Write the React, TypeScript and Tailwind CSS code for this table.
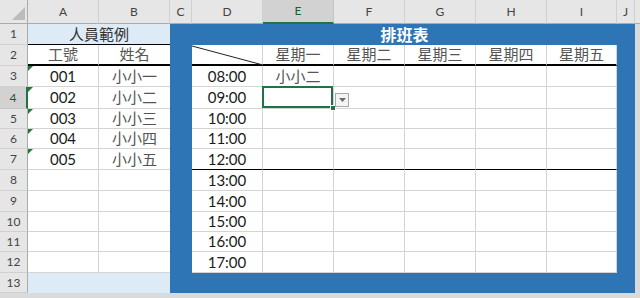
import React from "react";

type Row = { n: number; h: string };

// sheet row heights, rows 1..13
const ROWS: Row[] = [
  { n: 1, h: "h-[21px]" },
  { n: 2, h: "h-[21px]" },
  { n: 3, h: "h-[21px]" },
  { n: 4, h: "h-[22px]" },
  { n: 5, h: "h-[20px]" },
  { n: 6, h: "h-[20px]" },
  { n: 7, h: "h-[21px]" },
  { n: 8, h: "h-[21px]" },
  { n: 9, h: "h-[21px]" },
  { n: 10, h: "h-[20px]" },
  { n: 11, h: "h-[20px]" },
  { n: 12, h: "h-[21px]" },
  { n: 13, h: "h-[20px]" },
];

const COLUMNS = [
  { id: "A", w: "w-[71px]" },
  { id: "B", w: "w-[71px]" },
  { id: "C", w: "w-[22px]" },
  { id: "D", w: "w-[71px]" },
  { id: "E", w: "w-[71px]" },
  { id: "F", w: "w-[71px]" },
  { id: "G", w: "w-[71px]" },
  { id: "H", w: "w-[71px]" },
  { id: "I", w: "w-[70px]" },
  { id: "J", w: "w-[18px]" },
];

const STAFF = [
  ["001", "小小一"],
  ["002", "小小二"],
  ["003", "小小三"],
  ["004", "小小四"],
  ["005", "小小五"],
];

const DAYS = ["星期一", "星期二", "星期三", "星期四", "星期五"];
const TIMES = ["08:00", "09:00", "10:00", "11:00", "12:00", "13:00", "14:00", "15:00", "16:00", "17:00"];
const DAY_W = ["w-[71px]", "w-[71px]", "w-[71px]", "w-[71px]", "w-[70px]"];

const SELECTED_COL = "E";
const SELECTED_ROW = 4;

function TextFlag() {
  // little green "number stored as text" marker
  return (
    <svg className="absolute left-0 top-0" width="5" height="5" viewBox="0 0 5 5">
      <polygon points="0,0 5,0 0,5" fill="#1e7b34" />
    </svg>
  );
}

function LeftCells({ n }: { n: number }) {
  if (n === 1) {
    return (
      <div className="w-[142px] h-full bg-[#ddebf7] border-b border-black flex items-center justify-center text-[15px] text-[#333]">
        人員範例
      </div>
    );
  }
  if (n === 2) {
    return (
      <>
        <div className="w-[71px] h-full border-r border-[#d4d4d4] border-b-2 border-b-black flex items-center justify-center text-[15px] text-[#555]">
          工號
        </div>
        <div className="w-[71px] h-full border-b-2 border-b-black flex items-center justify-center text-[15px] text-[#555]">
          姓名
        </div>
      </>
    );
  }
  if (n === 13) {
    return <div className="w-[142px] h-full bg-[#ddebf7]" />;
  }
  const person = STAFF[n - 3];
  return (
    <>
      <div className="relative w-[71px] h-full border-r border-b border-[#d4d4d4] flex items-center justify-center text-[15px] text-[#1a1a1a]">
        {person && <TextFlag />}
        {person?.[0]}
      </div>
      <div className="w-[71px] h-full border-b border-[#d4d4d4] flex items-center justify-center text-[15px] text-[#555]">
        {person?.[1]}
      </div>
    </>
  );
}

function SelectedCell() {
  return (
    <>
      <div className="absolute -left-px -top-px right-0 bottom-0 border-2 border-[#217346] z-10" />
      <div className="absolute right-[-3px] bottom-[-3px] w-[6px] h-[6px] bg-[#217346] border border-white z-20" />
      <div className="absolute left-[72px] top-[6px] w-[14px] h-[14px] bg-[#f4f4f4] border border-[#a9a9a9] flex items-center justify-center z-20">
        <svg width="7" height="4" viewBox="0 0 7 4">
          <polygon points="0,0 7,0 3.5,4" fill="#6b6b6b" />
        </svg>
      </div>
    </>
  );
}

function ScheduleTable() {
  const body = ROWS.slice(1, 12);
  return (
    <div className="w-[425px] bg-white flex flex-col">
      {body.map((row, i) => {
        const isHead = row.n === 2;
        const noonLine = row.n === 7;
        const rowBorder = isHead
          ? "border-b-2 border-b-black"
          : noonLine
            ? "border-b border-b-black"
            : "border-b border-b-[#d4d4d4]";
        return (
          <div key={row.n} className={`flex ${row.h}`}>
            <div className={`relative w-[71px] h-full border-r border-r-[#d4d4d4] ${rowBorder} flex items-center justify-center text-[15px] text-[#1a1a1a]`}>
              {isHead ? (
                <svg className="absolute inset-0" width="71" height="21" viewBox="0 0 71 21" preserveAspectRatio="none">
                  <line x1="0" y1="1" x2="71" y2="20" stroke="#222" strokeWidth="1" />
                </svg>
              ) : (
                TIMES[i - 1]
              )}
            </div>
            {DAYS.map((day, d) => {
              const selected = row.n === SELECTED_ROW && d === 0;
              return (
                <div
                  key={day}
                  className={`relative ${DAY_W[d]} h-full border-r border-r-[#d4d4d4] ${rowBorder} flex items-center justify-center text-[15px] text-[#555]`}
                >
                  {isHead && day}
                  {row.n === 3 && d === 0 && "小小二"}
                  {selected && <SelectedCell />}
                </div>
              );
            })}
          </div>
        );
      })}
    </div>
  );
}

export default function App() {
  return (
    <div className="w-[640px] h-[298px] overflow-hidden bg-[#dadada] font-[family-name:Lato,'Noto_Sans_CJK_TC',sans-serif] select-none">
      {/* column header strip */}
      <div className="flex h-[24px] bg-[#e6e6e6]">
        <div className="relative w-[28px] h-full border-r border-b border-[#ababab]">
          <svg className="absolute left-[12px] top-[7px]" width="13" height="13" viewBox="0 0 13 13">
            <polygon points="13,0 13,13 0,13" fill="#bcbcbc" />
          </svg>
        </div>
        {COLUMNS.map((c) =>
          c.id === SELECTED_COL ? (
            <div
              key={c.id}
              className={`${c.w} h-full bg-[#d2d2d2] border-r border-r-[#c6c6c6] border-b-2 border-b-[#217346] flex items-center justify-center text-[12px] text-[#1d5e39]`}
            >
              {c.id}
            </div>
          ) : (
            <div
              key={c.id}
              className={`${c.w} h-full border-r border-r-[#d0d0d0] border-b border-b-[#ababab] flex items-center justify-center text-[12px] text-[#444]`}
            >
              {c.id}
            </div>
          )
        )}
        <div className="flex-1 h-full border-b border-[#ababab]" />
      </div>

      <div className="flex">
        {/* row numbers and staff list */}
        <div className="w-[170px] flex flex-col bg-white">
          {ROWS.map((row) => (
            <div key={row.n} className={`flex ${row.h}`}>
              {row.n === SELECTED_ROW ? (
                <div className="w-[28px] h-full bg-[#d2d2d2] border-r-2 border-r-[#217346] border-b border-b-[#c6c6c6] flex items-center justify-center text-[12px] text-[#1d5e39]">
                  {row.n}
                </div>
              ) : (
                <div className="w-[28px] h-full bg-[#e6e6e6] border-r border-r-[#ababab] border-b border-b-[#d0d0d0] flex items-center justify-center text-[12px] text-[#444]">
                  {row.n}
                </div>
              )}
              <LeftCells n={row.n} />
            </div>
          ))}
        </div>

        {/* schedule block */}
        <div className="w-[465px] h-[269px] bg-[#2e75b6] flex flex-col">
          <div className="h-[21px] flex">
            <div className="w-[22px]" />
            <div className="w-[425px] flex items-center justify-center text-white font-bold text-[16px]">
              排班表
            </div>
          </div>
          <div className="flex">
            <div className="w-[22px]" />
            <ScheduleTable />
          </div>
        </div>
      </div>
    </div>
  );
}
